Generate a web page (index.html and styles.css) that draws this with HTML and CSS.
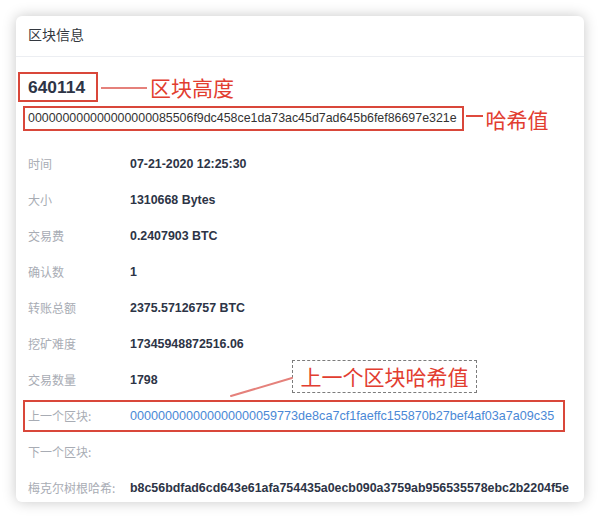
FILE: index.html
```html
<!DOCTYPE html>
<html lang="zh-CN">
<head>
<meta charset="utf-8">
<title>区块信息</title>
<link rel="stylesheet" href="styles.css">
</head>
<body>
<div class="card">
  <div class="card-header">区块信息</div>
  <div class="card-body">
    <div class="height-line">
      <span class="height-box">640114</span>
      <span class="dash dash-long"></span>
      <span class="note">区块高度</span>
    </div>
    <div class="hash-line">
      <span class="hash-box">000000000000000000085506f9dc458ce1da73ac45d7ad645b6fef86697e321e</span>
      <span class="dash dash-short"></span>
      <span class="note">哈希值</span>
    </div>
    <div class="rows">
      <div class="row"><span class="label">时间</span><span class="value">07-21-2020 12:25:30</span></div>
      <div class="row"><span class="label">大小</span><span class="value">1310668 Bytes</span></div>
      <div class="row"><span class="label">交易费</span><span class="value">0.2407903 BTC</span></div>
      <div class="row"><span class="label">确认数</span><span class="value">1</span></div>
      <div class="row"><span class="label">转账总额</span><span class="value">2375.57126757 BTC</span></div>
      <div class="row"><span class="label">挖矿难度</span><span class="value">17345948872516.06</span></div>
      <div class="row"><span class="label">交易数量</span><span class="value">1798</span></div>
      <div class="row marked"><span class="label">上一个区块:</span><span class="value link">000000000000000000059773de8ca7cf1faeffc155870b27bef4af03a7a09c35</span></div>
      <div class="row"><span class="label">下一个区块:</span><span class="value"></span></div>
      <div class="row"><span class="label">梅克尔树根哈希:</span><span class="value">b8c56bdfad6cd643e61afa754435a0ecb090a3759ab956535578ebc2b2204f5e</span></div>
    </div>
  </div>
  <div class="callout">上一个区块哈希值</div>
  <svg class="pointer" width="70" height="30" viewBox="0 0 70 30"><line x1="5" y1="25" x2="66" y2="7" stroke="#e5817b" stroke-width="2" stroke-linecap="round"/></svg>
</div>
</body>
</html>
```
FILE: styles.css
```css
html, body {
  margin: 0;
  padding: 0;
  background: #ffffff;
}
body {
  font-family: "Liberation Sans", "Noto Sans CJK SC", sans-serif;
  color: #2d3446;
}
.card {
  position: relative;
  box-sizing: border-box;
  width: 568px;
  margin: 16px;
  background: #fff;
  border-radius: 6px;
  box-shadow: 0 0 14px rgba(0, 0, 0, 0.22);
}
.card-header {
  padding: 10px 12px 14px;
  line-height: 16px;
  font-size: 14px;
  color: #333840;
  border-bottom: 1px solid #eceef2;
  font-family: "Noto Sans CJK SC", sans-serif;
}
.card-body {
  padding: 15px 12px 4px;
}
.height-line {
  display: flex;
  align-items: center;
  height: 30px;
}
.height-box {
  box-sizing: border-box;
  height: 30px;
  margin-left: -10px;
  padding: 0 11px 0 8px;
  border: 2px solid #d9473a;
  font-size: 17.4px;
  font-weight: bold;
  line-height: 26px;
  color: #2d3446;
}
.dash {
  display: block;
  height: 2px;
  background: #e5817b;
}
.dash-long {
  width: 46px;
  margin-left: 3px;
  margin-top: 2px;
}
.dash-short {
  width: 17px;
  margin-left: 2px;
  margin-bottom: 5px;
  background: #df4a3d;
}
.note {
  font-family: "Noto Sans CJK SC", sans-serif;
  font-size: 21px;
  line-height: 24px;
  color: #e23d30;
  margin-left: 3px;
}
.hash-line {
  display: flex;
  align-items: center;
  margin-top: 4px;
  height: 25px;
}
.hash-box {
  box-sizing: border-box;
  height: 25px;
  margin-left: -5px;
  padding: 0 5px 0 3px;
  border: 2px solid #d9473a;
  font-size: 12.4px;
  line-height: 21px;
  color: #333;
}
.hash-line .note {
  margin-left: 3px;
}
.rows {
  margin-top: 23px;
}
.row {
  display: flex;
  line-height: 20px;
  margin-top: 16px;
}
.row:first-child {
  margin-top: 0;
}
.label {
  width: 102px;
  flex: none;
  font-family: "Noto Sans CJK SC", sans-serif;
  font-size: 12px;
  color: #a8acb4;
}
.value {
  font-size: 12.4px;
  font-weight: bold;
  color: #2d3446;
}
.value.link {
  font-weight: normal;
  font-size: 12.6px;
  color: #4a88d6;
}
.row.marked {
  border: 2px solid #d9473a;
  padding: 4px 0 4px 3px;
  margin: 10px 7px -6px -5px;
}
.row.marked + .row {
  margin-top: 16px;
}
.callout {
  position: absolute;
  left: 276px;
  top: 344px;
  box-sizing: border-box;
  width: 185px;
  height: 33px;
  border: 1.5px dashed #7c7c7c;
  font-family: "Noto Sans CJK SC", sans-serif;
  font-size: 21px;
  line-height: 30px;
  color: #e23d30;
  text-align: center;
}
.pointer {
  position: absolute;
  left: 210px;
  top: 355px;
}
```
